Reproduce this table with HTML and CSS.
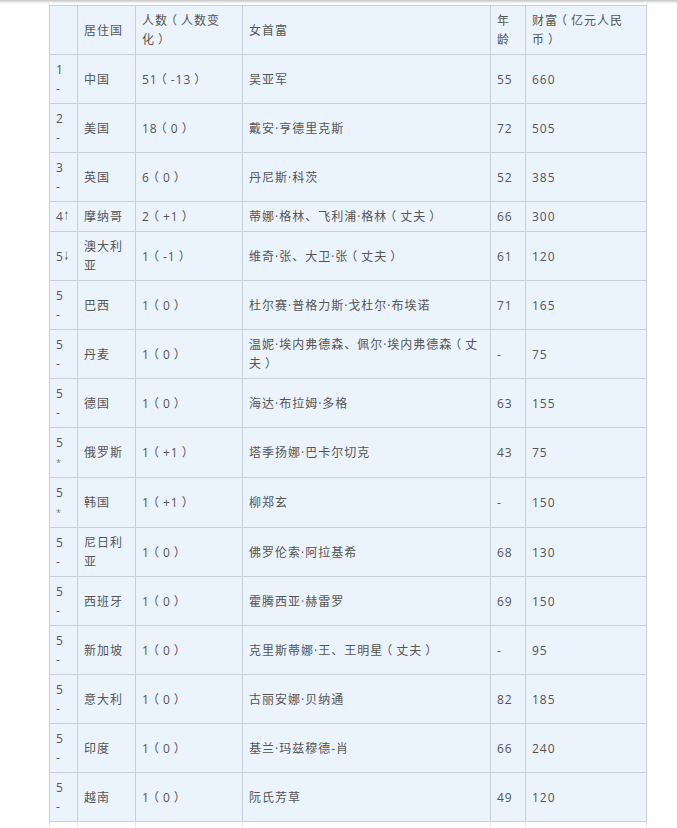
FILE: index.html
```html
<!DOCTYPE html>
<html lang="zh-CN">
<head>
<meta charset="utf-8">
<title>女首富</title>
<link rel="stylesheet" href="styles.css">
</head>
<body>
<div class="page">
  <div class="topbar"></div>
  <table class="rich">
    <colgroup>
      <col class="c-rank"><col class="c-country"><col class="c-count"><col class="c-name"><col class="c-age"><col class="c-wealth">
    </colgroup>
    <thead>
      <tr><th></th><th>居住国</th><th>人数<span class="p">（</span>人数变化<span class="p">）</span></th><th>女首富</th><th>年龄</th><th>财富<span class="p">（</span>亿元人民币<span class="p">）</span></th></tr>
    </thead>
    <tbody>
      <tr><td class="rank">1<br>-</td><td>中国</td><td>51<span class="p">（</span>-13<span class="p">）</span></td><td>吴亚军</td><td>55</td><td>660</td></tr>
      <tr><td class="rank">2<br>-</td><td>美国</td><td>18<span class="p">（</span>0<span class="p">）</span></td><td>戴安·亨德里克斯</td><td>72</td><td>505</td></tr>
      <tr><td class="rank">3<br>-</td><td>英国</td><td>6<span class="p">（</span>0<span class="p">）</span></td><td>丹尼斯·科茨</td><td>52</td><td>385</td></tr>
      <tr class="single"><td class="rank">4<span class="arrow">↑</span></td><td>摩纳哥</td><td>2<span class="p">（</span>+1<span class="p">）</span></td><td>蒂娜·格林、飞利浦·格林<span class="p">（</span>丈夫<span class="p">）</span></td><td>66</td><td>300</td></tr>
      <tr><td class="rank">5<span class="arrow">↓</span></td><td>澳大利亚</td><td>1<span class="p">（</span>-1<span class="p">）</span></td><td>维奇·张、大卫·张<span class="p">（</span>丈夫<span class="p">）</span></td><td>61</td><td>120</td></tr>
      <tr><td class="rank">5<br>-</td><td>巴西</td><td>1<span class="p">（</span>0<span class="p">）</span></td><td>杜尔赛·普格力斯·戈杜尔·布埃诺</td><td>71</td><td>165</td></tr>
      <tr><td class="rank">5<br>-</td><td>丹麦</td><td>1<span class="p">（</span>0<span class="p">）</span></td><td>温妮·埃内弗德森、佩尔·埃内弗德森<span class="p">（</span>丈夫<span class="p">）</span></td><td>-</td><td>75</td></tr>
      <tr><td class="rank">5<br>-</td><td>德国</td><td>1<span class="p">（</span>0<span class="p">）</span></td><td>海达·布拉姆·多格</td><td>63</td><td>155</td></tr>
      <tr><td class="rank">5<br><span class="new">*</span></td><td>俄罗斯</td><td>1<span class="p">（</span>+1<span class="p">）</span></td><td>塔季扬娜·巴卡尔切克</td><td>43</td><td>75</td></tr>
      <tr><td class="rank">5<br><span class="new">*</span></td><td>韩国</td><td>1<span class="p">（</span>+1<span class="p">）</span></td><td>柳郑玄</td><td>-</td><td>150</td></tr>
      <tr><td class="rank">5<br>-</td><td>尼日利亚</td><td>1<span class="p">（</span>0<span class="p">）</span></td><td>佛罗伦索·阿拉基希</td><td>68</td><td>130</td></tr>
      <tr><td class="rank">5<br>-</td><td>西班牙</td><td>1<span class="p">（</span>0<span class="p">）</span></td><td>霍腾西亚·赫雷罗</td><td>69</td><td>150</td></tr>
      <tr><td class="rank">5<br>-</td><td>新加坡</td><td>1<span class="p">（</span>0<span class="p">）</span></td><td>克里斯蒂娜·王、王明星<span class="p">（</span>丈夫<span class="p">）</span></td><td>-</td><td>95</td></tr>
      <tr><td class="rank">5<br>-</td><td>意大利</td><td>1<span class="p">（</span>0<span class="p">）</span></td><td>古丽安娜·贝纳通</td><td>82</td><td>185</td></tr>
      <tr><td class="rank">5<br>-</td><td>印度</td><td>1<span class="p">（</span>0<span class="p">）</span></td><td>基兰·玛兹穆德-肖</td><td>66</td><td>240</td></tr>
      <tr><td class="rank">5<br>-</td><td>越南</td><td>1<span class="p">（</span>0<span class="p">）</span></td><td>阮氏芳草</td><td>49</td><td>120</td></tr>
      <tr class="cut"><td></td><td></td><td></td><td></td><td></td><td></td></tr>
    </tbody>
  </table>
</div>
</body>
</html>
```
FILE: styles.css
```css
html, body {
  margin: 0;
  padding: 0;
  background: #ffffff;
}

.page {
  height: 828px;
  overflow: hidden;
  font-family: "Open Sans", "Noto Sans CJK SC", sans-serif;
  font-size: 12px;
  letter-spacing: 1px;
  color: #555555;
}

.topbar {
  height: 4px;
  background: linear-gradient(#c4c4c4, #eeeeee 60%, #ffffff);
}

.rich {
  margin: 1px 0 0 49px;
  width: 597px;
  table-layout: fixed;
  border-collapse: collapse;
  background: #ebf3fc;
}

.c-rank { width: 28px; }
.c-country { width: 58px; }
.c-count { width: 107px; }
.c-name { width: 248px; }
.c-age { width: 35px; }
.c-wealth { width: 121px; }

.rich th,
.rich td {
  border: 1px solid #c6d1dc;
  padding: 5px 6px;
  line-height: 19px;
  text-align: left;
  vertical-align: middle;
  font-weight: normal;
  word-break: break-all;
}

.rich thead th {
  height: 38px;
}

.rich tbody tr {
  height: 49px;
}

.rich tbody tr.single {
  height: 30px;
}

.rich td.rank {
  white-space: nowrap;
  overflow: visible;
}

.p {
  font-family: "Noto Sans CJK SC", sans-serif;
  font-feature-settings: "halt";
  line-height: 1;
  padding: 0 3px;
}

.arrow {
  display: inline-block;
  vertical-align: top;
  height: 19px;
  line-height: 19px;
  width: 5px;
  font-family: "DejaVu Sans", sans-serif;
  font-size: 12px;
  transform: scaleX(0.45);
  transform-origin: left center;
  letter-spacing: 0;
}

.new {
  font-size: 9px;
  color: #777777;
}

.rich tr.cut td {
  height: 30px;
  background: #ffffff;
  border-color: #e2e8ee;
}
```
